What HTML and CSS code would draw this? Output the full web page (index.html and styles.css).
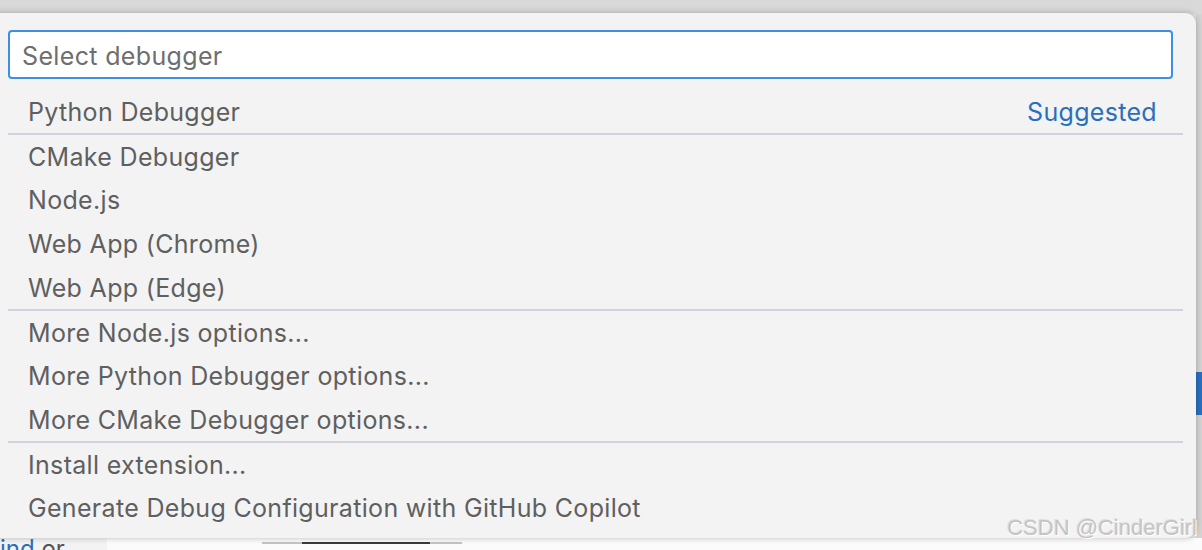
FILE: index.html
```html
<!DOCTYPE html>
<html>
<head>
<meta charset="utf-8">
<link rel="stylesheet" href="styles.css">
</head>
<body>
<div class="backdrop">
  <div class="topbar"></div>
  <div class="middle">
    <div class="area"></div>
    <div class="rightstrip"><div class="bluetab"></div></div>
  </div>
  <div class="bottom">
    <div class="sidebar"><span class="link">ind</span> <span class="plain">or</span></div>
    <div class="editor"><div class="track"><div class="thumb"></div></div></div>
  </div>
</div>

<div class="quickpick">
  <div class="inputbox"><span class="placeholder">Select debugger</span></div>
  <div class="list">
    <div class="row"><span>Python Debugger</span><span class="tag">Suggested</span></div>
    <div class="row sep"><span>CMake Debugger</span></div>
    <div class="row"><span>Node.js</span></div>
    <div class="row"><span>Web App (Chrome)</span></div>
    <div class="row"><span>Web App (Edge)</span></div>
    <div class="row sep"><span>More Node.js options...</span></div>
    <div class="row"><span>More Python Debugger options...</span></div>
    <div class="row"><span>More CMake Debugger options...</span></div>
    <div class="row sep"><span>Install extension...</span></div>
    <div class="row"><span>Generate Debug Configuration with GitHub Copilot</span></div>
  </div>
</div>

<div class="watermark">CSDN @CinderGirl</div>
</body>
</html>
```

FILE: styles.css
```css
html, body {
  margin: 0;
  padding: 0;
  width: 1202px;
  height: 550px;
  overflow: hidden;
  font-family: Inter, "Open Sans", "Liberation Sans", sans-serif;
}

.backdrop {
  display: flex;
  flex-direction: column;
  height: 550px;
  background: #ececec;
}

.topbar {
  height: 14px;
  background: #d9d9d9;
}

.middle {
  flex: 1;
  display: flex;
}

.area {
  flex: 1;
  background: #e4e4e4;
}

.rightstrip {
  width: 6px;
  background: #d4d4d4;
  padding-top: 358px;
}

.bluetab {
  height: 43px;
  background: #2a6fbe;
}

.bottom {
  height: 12px;
  display: flex;
  background: #fafafa;
}

.sidebar {
  width: 107px;
  background: #f3f3f3;
  font-size: 24px;
  line-height: 20px;
  overflow: hidden;
  white-space: nowrap;
  padding-top: 1px;
}

.sidebar .link { color: #2a6fbe; }
.sidebar .plain { color: #555; }

.editor {
  flex: 1;
  background: #fbfbfb;
  padding-left: 155px;
  padding-top: 4px;
}

.track {
  width: 160px;
  height: 2px;
  background: #c4c4c4;
  padding-left: 40px;
}

.thumb {
  width: 128px;
  height: 2px;
  background: #3a3a3a;
}

.quickpick {
  position: absolute;
  left: -6px;
  top: 13px;
  width: 1202px;
  height: 525px;
  background: #f3f3f3;
  border-radius: 0 11px 11px 0;
  box-shadow: 0 0 6px rgba(0, 0, 0, 0.25);
  box-sizing: border-box;
  padding: 17px 0 0 14px;
}

.inputbox {
  width: 1165px;
  height: 49px;
  box-sizing: border-box;
  border: 2px solid #3d8fe6;
  border-radius: 4px;
  background: #ffffff;
  display: flex;
  align-items: center;
  padding-left: 12px;
  padding-top: 3px;
}

.placeholder {
  font-size: 25px;
  color: #6e6e6e;
  letter-spacing: 0.35px;
}

.list {
  margin-top: 10px;
  width: 1175px;
}

.row {
  height: 44px;
  display: flex;
  align-items: center;
  justify-content: space-between;
  padding: 1px 26px 0 20px;
  font-size: 25px;
  letter-spacing: 0.32px;
  color: #5f5f5f;
  box-sizing: border-box;
}

.row.sep {
  border-top: 2px solid #d2d2de;
}

.tag {
  color: #2a6fbe;
}

.watermark {
  position: absolute;
  right: 5px;
  bottom: 9px;
  font-family: "Liberation Sans", Arial, sans-serif;
  font-size: 22px;
  color: #c4c4c4;
  text-shadow: 1px 1px 0 #ffffff, -1px -1px 0 #e0e0e0;
}
```
